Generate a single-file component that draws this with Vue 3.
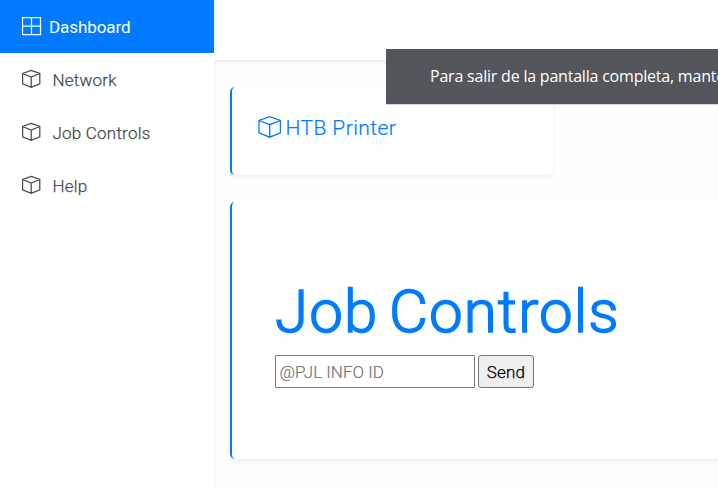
<script setup>
const links = [
  { label: 'Dashboard', icon: 'grid', cls: 'dashboard' },
  { label: 'Network', icon: 'box', cls: 'network' },
  { label: 'Job Controls', icon: 'box', cls: 'jobs' },
  { label: 'Help', icon: 'box', cls: 'help' },
]
</script>

<template>
  <div class="shell">
    <nav class="sidebar">
      <a v-for="link in links" :key="link.label" class="link" :class="[link.cls, { active: link.icon === 'grid' }]">
        <svg v-if="link.icon === 'grid'" class="icon" viewBox="0 0 20 20">
          <path d="M.5 1.5h18v17H.5zM9.5 1.5v17M.5 10h18" />
        </svg>
        <svg v-else class="icon" viewBox="0 0 20 20">
          <path d="M9.2 1.3 17.8 4.5V14.9L9.2 18.3.6 14.9V4.5zM.6 4.5 9.2 8 17.8 4.5M9.2 8v10.3" />
        </svg>
        <span class="label">{{ link.label }}</span>
      </a>
    </nav>
    <div class="content">
      <header class="topbar"></header>
      <main class="main">
        <section class="card device">
          <svg class="cube" viewBox="0 0 24 24">
            <path d="M11.7 1.7 22.4 5.5V17.9L11.7 22.2 1 17.9V5.5zM1 5.5 11.7 9.7 22.4 5.5M11.7 9.7v12.5" />
          </svg>
          <h2 class="device-name">HTB Printer</h2>
        </section>
        <section class="card panel">
          <h1 class="title">Job Controls</h1>
          <form class="form" @submit.prevent>
            <input class="command" type="text" placeholder="@PJL INFO ID" />
            <button class="send" type="submit">Send</button>
          </form>
        </section>
      </main>
    </div>
    <div class="toast">Para salir de la pantalla completa, mante</div>
  </div>
</template>

<style>
body {
  overflow: hidden;
}
</style>

<style scoped>
.shell {
  position: relative;
  display: flex;
  width: 718px;
  height: 489px;
  overflow: hidden;
  background: #fefefe;
  font-family: Roboto, sans-serif;
}
.sidebar {
  flex: none;
  width: 214px;
  background: #fff;
  box-shadow: 1px 0 3px rgba(0, 0, 0, 0.05);
  z-index: 1;
}
.link {
  display: flex;
  align-items: center;
  box-sizing: border-box;
  height: 53px;
  padding-left: 22px;
  color: #47494e;
  font-size: 17px;
  font-weight: 300;
  letter-spacing: 0.22px;
  -webkit-text-stroke: 0.25px currentColor;
}
.icon {
  width: 20px;
  height: 20px;
  margin-bottom: 1px;
  fill: none;
  stroke: currentColor;
  stroke-width: 1.25;
}
.active .icon {
  margin-bottom: 2px;
}
.label {
  margin-left: 10.5px;
  white-space: nowrap;
}
.active {
  background: #007bff;
  color: #fff;
  font-weight: 400;
  letter-spacing: -0.08px;
  -webkit-text-stroke: 0;
}
.active .label {
  margin-left: 7px;
}
.content {
  flex: 1;
  min-width: 0;
}
.topbar {
  height: 60px;
  background: #fff;
  box-shadow: 0 2px 4px rgba(0, 0, 0, 0.08);
}
.main {
  display: flex;
  flex-direction: column;
  gap: 27px;
  padding: 27px 0 0 16px;
}
.card {
  box-sizing: border-box;
  border-left: 2px solid #007bff;
  border-radius: 5px;
  background: #fff;
  box-shadow: 0 2px 4px rgba(0, 0, 0, 0.07);
  color: #007bff;
}
.device {
  display: flex;
  align-items: center;
  width: 323px;
  height: 88px;
  padding: 0 0 8px 26px;
}
.cube {
  width: 24px;
  height: 24px;
  fill: none;
  stroke: currentColor;
  stroke-width: 1.3;
}
.device-name {
  margin: 2px 0 0 3.5px;
  font-size: 21px;
  font-weight: 300;
  line-height: 26px;
  letter-spacing: 0.42px;
  -webkit-text-stroke: 0.2px currentColor;
}
.panel {
  width: 620px;
  height: 257px;
  padding: 74px 0 0 43px;
}
.title {
  margin: 0;
  font-size: 60px;
  font-weight: 300;
  line-height: 72px;
  letter-spacing: 1.1px;
  word-spacing: -5px;
  -webkit-text-stroke: 1.5px currentColor;
  white-space: nowrap;
}
.form {
  display: flex;
  gap: 3px;
  margin-top: 7px;
}
.command,
.send {
  box-sizing: border-box;
  height: 33px;
  border: 1px solid #767676;
  font-family: Roboto, sans-serif;
  font-size: 17px;
  font-weight: 300;
}
.command {
  width: 200px;
  padding: 1px 3.5px;
  border-radius: 1px;
  background: #fff;
}
.command::placeholder {
  color: #757575;
  -webkit-text-stroke: 0.2px #757575;
}
.send {
  width: 56px;
  padding: 1px 0;
  border-radius: 3px;
  background: #efefef;
  color: #000;
  letter-spacing: 0.2px;
  -webkit-text-stroke: 0.25px #000;
}
.toast {
  position: absolute;
  z-index: 2;
  top: 49px;
  left: 386px;
  box-sizing: border-box;
  width: 332px;
  height: 55px;
  padding-left: 44px;
  overflow: hidden;
  background: #53565b;
  box-shadow: 0 1px 0 #d8d8d8;
  color: #fff;
  font-family: "Open Sans", sans-serif;
  font-size: 16px;
  line-height: 54px;
  letter-spacing: -0.21px;
  white-space: nowrap;
}
</style>
